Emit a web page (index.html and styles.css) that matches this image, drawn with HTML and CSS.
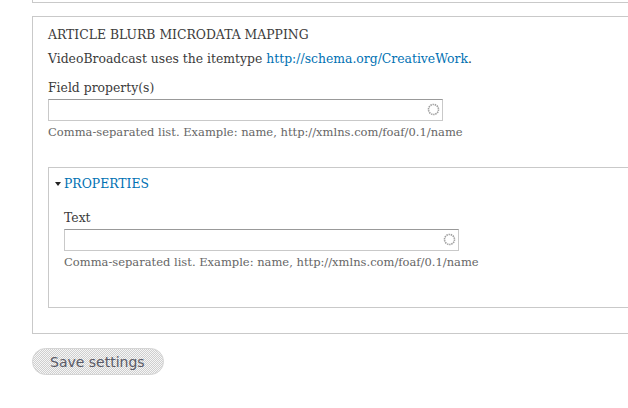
FILE: index.html
```html
<!DOCTYPE html>
<html lang="en">
<head>
<meta charset="utf-8">
<title>Microdata mapping</title>
<link rel="stylesheet" href="styles.css">
</head>
<body>
<div class="page">
  <div class="fieldset fieldset-prev"></div>

  <div class="fieldset fieldset-main">
    <div class="legend">ARTICLE BLURB MICRODATA MAPPING</div>
    <p class="intro">VideoBroadcast uses the itemtype <a href="#">http://schema.org/CreativeWork</a>.</p>

    <div class="form-item">
      <label class="label">Field property(s)</label>
      <div class="autocomplete">
        <input class="text-input" type="text">
        <svg class="throbber" width="13" height="13" viewBox="0 0 13 13"><circle cx="6.5" cy="6.5" r="5" fill="none" stroke="#a0a0a0" stroke-width="1.6" stroke-dasharray="1.4 0.8"/></svg>
      </div>
      <div class="description">Comma-separated list. Example: name, http://xmlns.com/foaf/0.1/name</div>
    </div>

    <div class="fieldset fieldset-inner">
      <a class="legend-link" href="#"><span class="arrow"></span>PROPERTIES</a>
      <div class="form-item">
        <label class="label">Text</label>
        <div class="autocomplete">
          <input class="text-input" type="text">
          <svg class="throbber" width="13" height="13" viewBox="0 0 13 13"><circle cx="6.5" cy="6.5" r="5" fill="none" stroke="#a0a0a0" stroke-width="1.6" stroke-dasharray="1.4 0.8"/></svg>
        </div>
        <div class="description">Comma-separated list. Example: name, http://xmlns.com/foaf/0.1/name</div>
      </div>
    </div>
  </div>

  <div class="actions">
    <button class="button" type="button">Save settings</button>
  </div>
</div>
</body>
</html>
```

FILE: styles.css
```css
html, body {
  margin: 0;
  padding: 0;
  background: #fff;
  overflow: hidden;
}

body {
  font-family: "DejaVu Serif", Georgia, serif;
  font-size: 12.4px;
  color: #3b3b3b;
}

.page {
  padding-left: 32px;
}

.fieldset {
  border: 1px solid #c9c9c9;
  box-sizing: border-box;
}

.fieldset-prev {
  width: 700px;
  height: 3px;
  border-top: none;
}

.fieldset-main {
  width: 700px;
  margin-top: 13px;
  padding: 8px 15px 25px 15px;
}

.legend {
  font-size: 12.4px;
  line-height: 20px;
}

.intro {
  margin: 4px 0 0;
  line-height: 20px;
}

.intro a,
.legend-link {
  color: #0071b3;
  text-decoration: none;
}

.form-item {
  margin-top: 9px;
}

.label {
  display: block;
  line-height: 20px;
  margin-bottom: 1px;
}

.autocomplete {
  position: relative;
  width: 395px;
}

.text-input {
  display: block;
  box-sizing: border-box;
  width: 395px;
  height: 22px;
  margin: 0;
  padding: 0 4px;
  border: 1px solid #c9c9c9;
  border-top-color: #999;
  background: #fff;
  font: inherit;
}

.throbber {
  position: absolute;
  right: 3px;
  top: 4px;
}

.description {
  font-size: 11.5px;
  color: #666;
  line-height: 16px;
  margin-top: 3px;
}

.fieldset-inner {
  margin-top: 27px;
  padding: 6px 15px 37px 15px;
  width: 700px;
}

.legend-link {
  display: flex;
  align-items: center;
  margin-left: -9px;
  line-height: 20px;
}

.arrow {
  width: 0;
  height: 0;
  border-left: 3.5px solid transparent;
  border-right: 3.5px solid transparent;
  border-top: 4px solid #222;
  margin-right: 3px;
}

.fieldset-inner .form-item {
  margin-top: 14px;
}

.actions {
  margin-top: 14px;
}

.button {
  width: 132px;
  height: 27px;
  border: 1px solid #d4d4d4;
  border-radius: 14px;
  background-color: #e6e6e6;
  background-image: repeating-conic-gradient(#cfcfcf 0 25%, #f6f6f6 0 50%);
  background-size: 2px 2px;
  font-family: "DejaVu Sans", Tahoma, Verdana, sans-serif;
  font-size: 14px;
  color: #5a5a66;
  text-align: left;
  padding: 0 0 0 17px;
}
```
